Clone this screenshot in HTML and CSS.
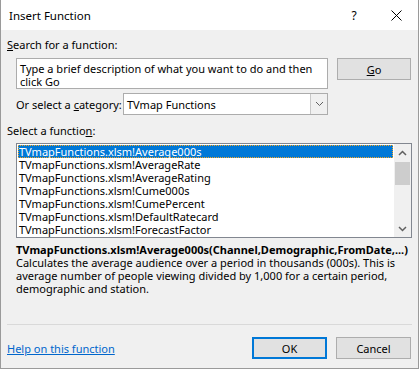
FILE: index.html
```html
<!DOCTYPE html>
<html>
<head>
<meta charset="utf-8">
<link rel="stylesheet" href="styles.css">
</head>
<body>
<div class="window">
  <div class="titlebar">
    <span class="title">Insert Function</span>
    <span class="help">?</span>
    <span class="close"><svg width="11" height="11" viewBox="0 0 11 11"><path d="M0.5 0.5 L10.5 10.5 M10.5 0.5 L0.5 10.5" stroke="#000" stroke-width="1" fill="none"/></svg></span>
  </div>
  <div class="content">
    <div class="label"><u>S</u>earch for a function:</div>
    <div class="search-row">
      <div class="textbox">Type a brief description of what you want to do and then<br>click Go</div>
      <div class="button go"><u>G</u>o</div>
    </div>
    <div class="category-row">
      <span class="cat-label">Or select a <u>c</u>ategory:</span>
      <div class="select">
        <span class="select-text">TVmap Functions</span>
        <span class="select-btn"><svg width="9" height="6" viewBox="0 0 9 6"><path d="M1 1 L4.5 4.5 L8 1" stroke="#606060" stroke-width="1" fill="none"/></svg></span>
      </div>
    </div>
    <div class="label fn-label">Select a functio<u>n</u>:</div>
    <div class="listbox">
      <div class="items">
        <div class="item selected">TVmapFunctions.xlsm!Average000s</div>
        <div class="item">TVmapFunctions.xlsm!AverageRate</div>
        <div class="item">TVmapFunctions.xlsm!AverageRating</div>
        <div class="item">TVmapFunctions.xlsm!Cume000s</div>
        <div class="item">TVmapFunctions.xlsm!CumePercent</div>
        <div class="item">TVmapFunctions.xlsm!DefaultRatecard</div>
        <div class="item">TVmapFunctions.xlsm!ForecastFactor</div>
      </div>
      <div class="scrollbar">
        <span class="arrow"><svg width="9" height="6" viewBox="0 0 9 6"><path d="M1 5 L4.5 1.5 L8 5" stroke="#606060" stroke-width="1.5" fill="none"/></svg></span>
        <span class="thumb"></span>
        <span class="track"></span>
        <span class="arrow"><svg width="9" height="6" viewBox="0 0 9 6"><path d="M1 1 L4.5 4.5 L8 1" stroke="#606060" stroke-width="1.5" fill="none"/></svg></span>
      </div>
    </div>
    <div class="signature">TVmapFunctions.xlsm!Average000s(Channel,Demographic,FromDate,...)</div>
    <div class="description">Calculates the average audience over a period in thousands (000s). This is<br>average number of people viewing divided by 1,000 for a certain period,<br>demographic and station.</div>
    <div class="separator"></div>
    <div class="bottom-row">
      <a class="link" href="#">Help on this function</a>
      <div class="buttons">
        <div class="button ok">OK</div>
        <div class="button">Cancel</div>
      </div>
    </div>
  </div>
</div>
</body>
</html>
```
FILE: styles.css
```css
* { box-sizing: border-box; }
html, body { margin: 0; padding: 0; background: #f0f0f0; }
body {
  font-family: "Noto Sans", "Open Sans", sans-serif;
  font-size: 11px;
  line-height: 13px;
  color: #000;
}
.window {
  width: 419px;
  height: 369px;
  border: 1px solid #9a9a9a;
  border-top: none;
  background: #f0f0f0;
  overflow: hidden;
}
.titlebar {
  height: 30px;
  background: #fff;
  display: flex;
  align-items: center;
  padding-left: 8px;
}
.title { flex: 1; font-size: 11.5px; padding-top: 1px; }
.help { width: 20px; margin-right: 27px; text-align: center; font-size: 12px; }
.close { width: 11px; margin-right: 16px; display: flex; }
.content { padding: 8px 7px 0 6px; }
.label { height: 13px; white-space: nowrap; }
u { text-decoration: underline; text-underline-offset: 1px; }
.search-row { display: flex; align-items: flex-start; margin-top: 7px; padding-left: 9px; gap: 9px; }
.textbox {
  width: 312px;
  height: 31px;
  background: #fff;
  border: 1px solid #acacac;
  padding: 3px 0 0 3px;
  white-space: nowrap;
}
.button {
  width: 75px;
  height: 22px;
  background: #e1e1e1;
  border: 1px solid #adadad;
  display: flex;
  align-items: center;
  justify-content: center;
}
.go { width: 74px; }
.category-row { display: flex; align-items: center; margin-top: 4px; padding-left: 9px; height: 22px; }
.cat-label { width: 107px; white-space: nowrap; }
.select {
  width: 205px;
  height: 22px;
  background: #fff;
  border: 1px solid #acacac;
  display: flex;
  align-items: center;
}
.select-text { flex: 1; padding-left: 3px; }
.select-btn {
  width: 17px;
  height: 20px;
  background: #f0f0f0;
  border-left: 1px solid #c8c8c8;
  display: flex;
  align-items: center;
  justify-content: center;
}
.fn-label { margin-top: 9px; }
.listbox {
  margin: 6px 0 0 9px;
  width: 396px;
  height: 95px;
  background: #fff;
  border: 1px solid #828790;
  display: flex;
}
.items { flex: 1; padding: 1px 1px 0 1px; }
.item { height: 13px; padding-left: 1px; white-space: nowrap; }
.item.selected {
  background: #0078d7;
  color: #fff;
  outline: 1px dotted #f5a623;
  outline-offset: -1px;
}
.scrollbar {
  width: 17px;
  background: #f0f0f0;
  display: flex;
  flex-direction: column;
  align-items: center;
}
.arrow { height: 17px; width: 17px; display: flex; align-items: center; justify-content: center; }
.thumb { width: 15px; height: 23px; background: #cdcdcd; margin-top: 1px; }
.track { flex: 1; }
.signature { margin: 5px 0 0 9px; font-weight: bold; white-space: nowrap; height: 13px; }
.description { margin-left: 9px; white-space: nowrap; }
.separator { margin-top: 29px; height: 1px; background: #d9d9d9; width: 405px; }
.bottom-row { display: flex; align-items: center; justify-content: space-between; margin-top: 12px; }
.link { color: #0066cc; text-decoration: underline; }
.buttons { display: flex; gap: 9px; padding-right: 0; }
.ok { border: 2px solid #0078d7; }
```
